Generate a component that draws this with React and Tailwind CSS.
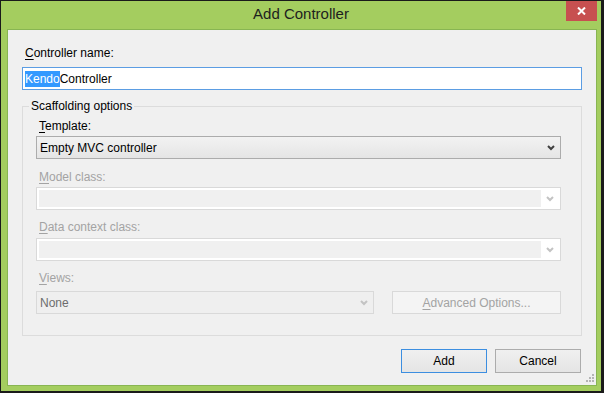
import React from "react"

const font = "font-['Segoe_UI','Liberation_Sans',sans-serif]"

const Chevron = ({ color }) => (
    <svg width="8" height="6" viewBox="0 0 8 6">
        <polyline points="1,1 4,4 7,1" fill="none" stroke={color} strokeWidth="2" />
    </svg>
)

const Label = ({ letter, rest, disabled, className = "" }) => (
    <div className={`h-[16px] text-[12px] leading-[16px] ${disabled ? "text-[#a3a3a3]" : "text-black"} ${className}`}>
        <span className="underline underline-offset-[2px]">{letter}</span>
        {rest}
    </div>
)

// disabled combobox: white inner frame, grey text area, white button area
const DisabledCombo = ({ className = "" }) => (
    <div className={`flex h-[23px] border border-[#d9d9d9] bg-white p-[2px] ${className}`}>
        <div className="flex-1 bg-[#f0f0f0]" />
        <div className="flex w-[17px] items-center justify-center">
            <Chevron color="#c3c3c3" />
        </div>
    </div>
)

const App = () => {
    return (
        <div className={`flex h-[393px] w-[604px] flex-col border-t border-l border-r-[3px] border-b-[2px] border-[#1a1a1a] bg-[#a4cd5f] ${font}`}>
            {/* Title bar */}
            <div className="relative flex h-[28px] items-center justify-center">
                <span className="pb-[1px] text-[15px] text-[#1e1e1e]">Add Controller</span>
                <button className="absolute right-[4px] top-0 flex h-[20px] w-[31px] items-center justify-center bg-[#c75050]">
                    <svg width="9" height="8" viewBox="0 0 9 8">
                        <path d="M1 0.5 L8 7.5 M8 0.5 L1 7.5" stroke="white" strokeWidth="2" />
                    </svg>
                </button>
            </div>

            {/* Client area */}
            <div className="relative mb-[5px] ml-[6px] mr-[4px] flex flex-1 flex-col border border-[#88b552] bg-[#f0f0f0] px-[14px] pt-[15px]">
                <Label letter="C" rest="ontroller name:" className="ml-[3px]" />
                <div className="mt-[6px] flex h-[23px] items-center border border-[#5b9de3] bg-white px-[2px] text-[12px]">
                    <span className="bg-[#3399ff] leading-[16px] text-white">Kendo</span>
                    <span className="leading-[16px] text-black">Controller</span>
                </div>

                {/* Scaffolding options */}
                <fieldset className="mt-[8px] border border-[#dcdcdc] pl-[13px] pr-[20px] pb-[21px] pt-[4px]">
                    <legend className="-ml-[7px] px-[2px] text-[12px] leading-[16px] text-black">Scaffolding options</legend>

                    <Label letter="T" rest="emplate:" className="ml-[3px]" />
                    <div className="mt-[2px] flex h-[23px] items-center justify-between border border-[#acacac] bg-gradient-to-b from-[#f2f2f2] to-[#e5e5e5] pl-[3px] pr-[5px] text-[12px] text-black">
                        <span>Empty MVC controller</span>
                        <Chevron color="#404040" />
                    </div>

                    <Label letter="M" rest="odel class:" disabled className="ml-[3px] mt-[10px]" />
                    <DisabledCombo className="mt-[2px]" />

                    <Label letter="D" rest="ata context class:" disabled className="ml-[3px] mt-[9px]" />
                    <DisabledCombo className="mt-[3px]" />

                    <Label letter="V" rest="iews:" disabled className="ml-[3px] mt-[9px]" />
                    <div className="mt-[5px] flex items-center">
                        <div className="flex h-[23px] w-[338px] items-center justify-between border border-[#d9d9d9] bg-[#efefef] pl-[3px] pr-[5px] text-[12px] text-[#6d6d6d]">
                            <span>None</span>
                            <Chevron color="#c3c3c3" />
                        </div>
                        <button className="ml-[18px] flex h-[23px] flex-1 items-center justify-center border border-[#d9d9d9] bg-[#f4f4f4] text-[12px] text-[#a3a3a3]">
                            <span className="underline underline-offset-[2px]">A</span>dvanced Options...
                        </button>
                    </div>
                </fieldset>

                {/* Dialog buttons */}
                <div className="mt-[13px] flex justify-end gap-[8px] pr-[1px]">
                    <button className="h-[24px] w-[86px] border border-[#3c8ee0] bg-gradient-to-b from-[#f0f0f0] to-[#e5e5e5] text-[12px] text-black">
                        Add
                    </button>
                    <button className="h-[24px] w-[86px] border border-[#acacac] bg-gradient-to-b from-[#f0f0f0] to-[#e5e5e5] text-[12px] text-black">
                        Cancel
                    </button>
                </div>

                {/* Resize grip */}
                <svg className="absolute bottom-[2px] right-[1px]" width="10" height="10" viewBox="0 0 10 10">
                    <rect x="7" y="1" width="2" height="2" fill="#b4b4b4" />
                    <rect x="4" y="4" width="2" height="2" fill="#b4b4b4" />
                    <rect x="7" y="4" width="2" height="2" fill="#b4b4b4" />
                    <rect x="1" y="7" width="2" height="2" fill="#b4b4b4" />
                    <rect x="4" y="7" width="2" height="2" fill="#b4b4b4" />
                    <rect x="7" y="7" width="2" height="2" fill="#b4b4b4" />
                </svg>
            </div>
        </div>
    )
}

export default App
